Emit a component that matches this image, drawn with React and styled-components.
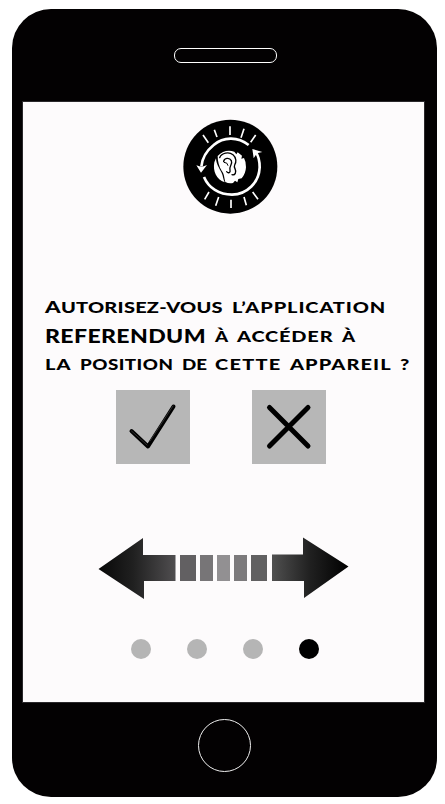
import React from "react";
import styled, { createGlobalStyle } from "styled-components";

const GlobalStyle = createGlobalStyle`
  * { box-sizing: border-box; }
  body { margin: 0; background: #fff; overflow: hidden; }
`;

const Page = styled.div`
  width: 445px;
  height: 804px;
  padding: 9px 8px 7px 12px;
`;

const Phone = styled.main`
  width: 425px;
  height: 788px;
  padding: 0 13px 0 11px;
  border-radius: 39px;
  background: #030102;
  display: flex;
  flex-direction: column;
`;

const TopBezel = styled.header`
  height: 93px;
  padding: 39px 0 0 151px;
`;

const Speaker = styled.div`
  width: 103px;
  height: 15px;
  border: 1px solid #fff;
  border-radius: 7px;
`;

const Screen = styled.section`
  height: 600px;
  background: #fdfbfc;
  box-shadow: 0 0 0 1px #2a282b;
  display: flex;
  flex-direction: column;
`;

const BottomBezel = styled.footer`
  padding: 17px 0 0 175px;
`;

const HomeButton = styled.div`
  width: 53px;
  height: 53px;
  border: 1px solid #eee;
  border-radius: 50%;
`;

const Logo = styled.svg`
  display: block;
  flex: none;
  width: 110px;
  height: 110px;
  margin: 10px 0 0 152px;
`;

const Question = styled.h1`
  margin: 71px 0 0 22px;
  height: 92px;
  color: #000;
  font-family: Lato, "Liberation Sans", sans-serif;
  font-size: 15.6px;
  font-weight: 900;
  line-height: 28.5px;
`;

const Line = styled.span`
  display: flex;
  height: 28.5px;
  white-space: pre;
`;

const Word = styled.span`
  flex: none;
  width: ${(p) => p.$width}px;
  font-size: ${(p) => p.$size || 15.6}px;
  letter-spacing: ${(p) => p.$spacing || 0}px;
  transform: scaleX(${(p) => p.$stretch || 1.28});
  transform-origin: left;

  &::first-letter { font-size: ${(p) => p.$initial || p.$size || 15.6}px; }
`;

const Choices = styled.div`
  display: flex;
  gap: 62px;
  margin: 5px 0 0 93px;
`;

const Choice = styled.button`
  width: 74px;
  height: 74px;
  padding: 0;
  border: 0;
  background: #b7b7b7;

  svg { display: block; }
`;

const Arrows = styled.svg`
  display: block;
  flex: none;
  margin: 71px 0 0 67px;
`;

const Dots = styled.div`
  display: flex;
  gap: 36px;
  margin: 38px 0 0 108px;
`;

const Dot = styled.span`
  width: 20px;
  height: 20px;
  border-radius: 50%;
  background: ${(p) => (p.$active ? "#000" : "#b5b5b5")};
`;

const lines = [
  [
    { text: "AUTORISEZ-VOUS", width: 187, initial: 17.4, spacing: 0.2 },
    { text: "L’APPLICATION", width: 160, spacing: 0.7 },
  ],
  [
    { text: "REFERENDUM", width: 170, size: 18, spacing: 0.3 },
    { text: "À", width: 22, stretch: 1.2 },
    { text: "ACCÉDER", width: 105, spacing: 0.65 },
    { text: "À", width: 20, stretch: 1.2 },
  ],
  [
    { text: "LA", width: 35, spacing: 0.8 },
    { text: "POSITION", width: 102, spacing: 0.4, stretch: 1.2 },
    { text: "DE", width: 33, stretch: 1.2 },
    { text: "CETTE", width: 75, spacing: 1 },
    { text: "APPAREIL", width: 110, spacing: 0.85 },
    { text: "?", width: 14 },
  ],
];

function EarLogo() {
  return (
    <Logo viewBox="0 0 330 330">
      <circle cx="166" cy="164" r="141" fill="#000" />
      <g fill="none" stroke="#fff" strokeWidth="8">
        <path d="M221 99 C190 75 147 72 116 99 C90 120 81 143 79 164" />
        <path d="M87 195 C101 228 132 248 171 248 C217 247 252 211 254 166 C254 147 250 131 242 120" />
        <path d="M84 69L100 92M118 53L126 75M165 43V69M207 50L198 77M242 69L227 91M102 240L89 262M131 255L122 281M168 263V288M207 255L214 280M233 240L249 262" strokeWidth="5" />
      </g>
      <path d="M64 160L80 165L96 159L78 182ZM232 111L262 120L246 124L236 139Z" fill="#fff" />
      <path d="M128 132C142 117 160 113 178 119L184 127L188 121L201 131L199 140L207 138Q214 151 213 166Q212 185 200 199L190 201L187 211L180 206L174 213Q162 216 151 210C147 195 148 186 140 176C132 165 128 147 128 132Z" fill="#fff" />
      <path d="M123 139C124 158 133 168 139 181C145 193 144 203 149 211C124 202 113 178 118 151Z" fill="#fff" />
      <g fill="none" stroke="#000" strokeWidth="4" strokeLinecap="round">
        <path d="M134 137C140 122 162 119 174 128C185 137 184 151 179 159C174 168 187 174 181 184Q178 190 171 188" />
        <path d="M146 149C147 138 163 135 169 146C174 156 161 164 165 174C167 182 160 185 155 179" />
        <path d="M148 151Q158 151 159 160" strokeWidth="3" />
      </g>
    </Logo>
  );
}

function DirectionArrows() {
  const bars = [[180, 16, "#626062"], [200, 13, "#777577"], [217, 13, "#929092"], [234, 13, "#7c7a7c"], [251, 16, "#616061"]];
  return (
    <Arrows width="270" height="66" viewBox="90 535 270 66">
      <defs>
        <linearGradient id="leftShade">
          <stop offset="0" stopColor="#080808" />
          <stop offset=".45" stopColor="#202020" />
          <stop offset="1" stopColor="#504e50" />
        </linearGradient>
        <linearGradient id="rightShade">
          <stop offset="0" stopColor="#505050" />
          <stop offset=".5" stopColor="#202020" />
          <stop offset="1" stopColor="#000" />
        </linearGradient>
      </defs>
      <path d="M98.5 569L143 538V555H175.5V581H144V599Z" fill="url(#leftShade)" />
      {bars.map(([x, width, color]) => (
        <rect key={x} x={x} y="555" width={width} height="26" fill={color} />
      ))}
      <path d="M272 554.5H303V537.5L348.5 566.5L304 598V581H272Z" fill="url(#rightShade)" />
    </Arrows>
  );
}

export default function App() {
  return (
    <>
      <GlobalStyle />
      <Page>
        <Phone>
          <TopBezel><Speaker /></TopBezel>
          <Screen>
            <EarLogo />
            <Question>
              {lines.map((line, index) => (
                <Line key={index}>
                  {line.map((word, i) => (
                    <Word key={i} $width={word.width} $size={word.size} $initial={word.initial} $spacing={word.spacing} $stretch={word.stretch}>
                      {word.text}
                    </Word>
                  ))}
                </Line>
              ))}
            </Question>
            <Choices>
              <Choice aria-label="Oui">
                <svg width="74" height="74" viewBox="0 0 74 74" fill="none" strokeLinecap="round" strokeLinejoin="round">
                  <path d="M15.5 41L32 56.5L57.5 16.5" stroke="#000" strokeWidth="4" />
                  <path d="M15.5 41L31 55M34 51L57 16" stroke="#303030" strokeWidth="1" />
                </svg>
              </Choice>
              <Choice aria-label="Non">
                <svg width="74" height="74" viewBox="0 0 74 74" stroke="#000" strokeWidth="5" strokeLinecap="round">
                  <path d="M17.5 17.5L56 56M56 17.5L17.5 56" />
                </svg>
              </Choice>
            </Choices>
            <DirectionArrows />
            <Dots><Dot /><Dot /><Dot /><Dot $active /></Dots>
          </Screen>
          <BottomBezel><HomeButton /></BottomBezel>
        </Phone>
      </Page>
    </>
  );
}
